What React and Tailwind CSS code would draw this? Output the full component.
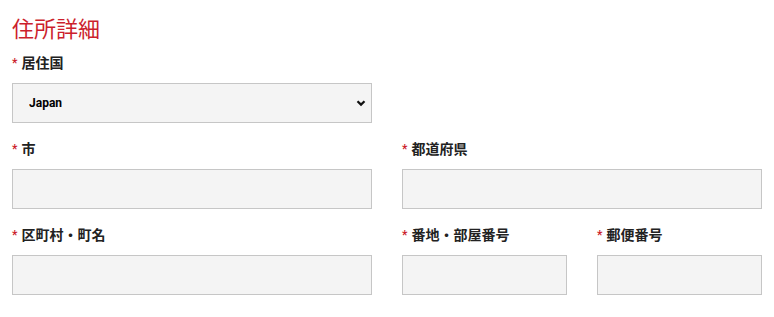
function Label({ children }) {
  return (
    <label className="flex h-5 items-center gap-1 text-[14px] font-bold leading-5 text-[#222]">
      <span className="text-[#cc1f2d] text-[12px]">*</span>
      <span>{children}</span>
    </label>
  );
}

function Field({ label, className = '' }) {
  return (
    <div className={className}>
      <Label>{label}</Label>
      <input
        type="text"
        className="mt-[10px] block h-10 w-full border border-[#c6c6c6] bg-[#f4f4f4] px-3 text-[13px] outline-none"
      />
    </div>
  );
}

export default function App() {
  return (
    <div
      className="min-h-[317px] bg-white px-3 pt-4"
      style={{ fontFamily: '"Roboto", "Noto Sans CJK JP", sans-serif' }}
    >
      <h2 className="h-7 text-[22px] leading-7 font-normal text-[#cc1f2d]">住所詳細</h2>

      <div className="mt-[9px] w-[360px]">
        <Label>居住国</Label>
        <div className="relative mt-[10px]">
          <select
            defaultValue="Japan"
            className="block h-10 w-full appearance-none border border-[#c6c6c6] bg-[#f4f4f4] pl-4 text-[12px] font-bold text-black outline-none"
          >
            <option>Japan</option>
          </select>
          <svg
            className="pointer-events-none absolute right-[6px] top-1/2 -translate-y-1/2"
            width="10"
            height="8"
            viewBox="0 0 10 8"
          >
            <path d="M1.5 2.2 L5 5.6 L8.5 2.2" fill="none" stroke="#111" strokeWidth="2.2" />
          </svg>
        </div>
      </div>

      <div className="mt-4 grid grid-cols-[360px_360px] gap-x-[30px]">
        <Field label="市" />
        <Field label="都道府県" />
      </div>

      <div className="mt-4 grid grid-cols-[360px_165px_165px] gap-x-[30px]">
        <Field label="区町村・町名" />
        <Field label="番地・部屋番号" />
        <Field label="郵便番号" />
      </div>
    </div>
  );
}
